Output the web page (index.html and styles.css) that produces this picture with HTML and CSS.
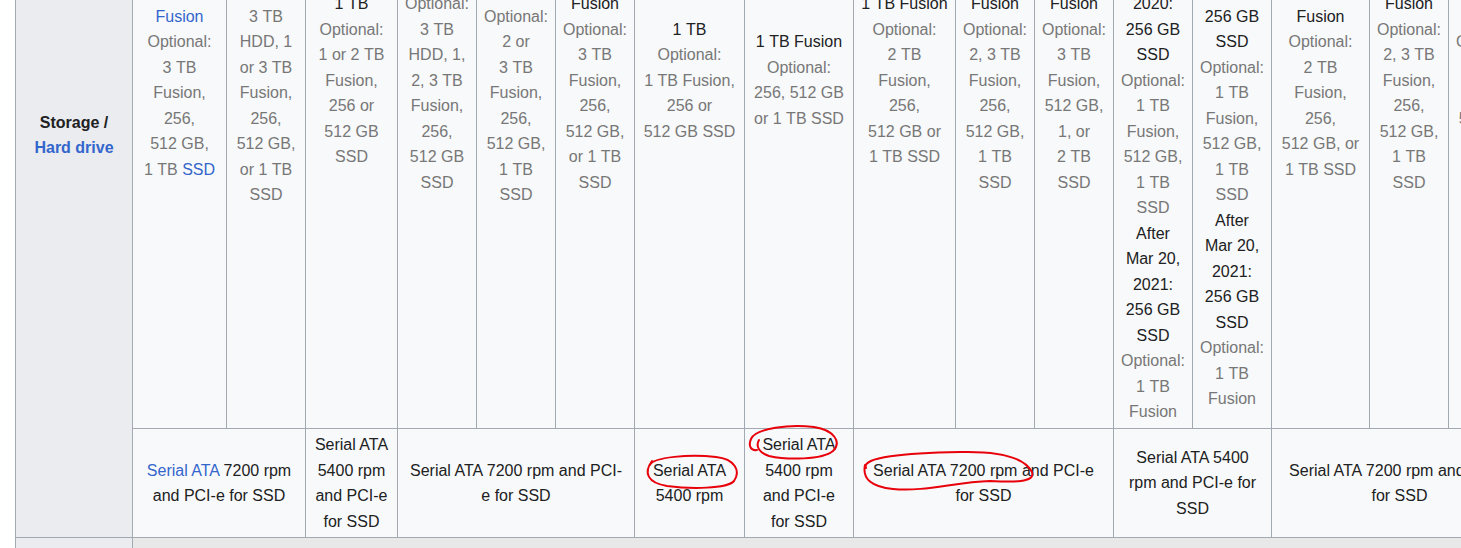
FILE: index.html
```html
<!DOCTYPE html>
<html lang="en">
<head>
<meta charset="utf-8">
<title>iMac storage comparison</title>
<link rel="stylesheet" href="styles.css">
</head>
<body>
<div class="page">
<table class="specs">
  <colgroup>
    <col class="w117"><col class="w94"><col class="w79"><col class="w92">
    <col class="w79"><col class="w79"><col class="w79"><col class="w110">
    <col class="w109"><col class="w102"><col class="w79"><col class="w79">
    <col class="w79"><col class="w79"><col class="w98"><col class="w79"><col class="w79">
  </colgroup>
  <tbody>
    <tr>
      <th rowspan="2" class="row-head">Storage / <a href="#">Hard drive</a></th>
      <td>1&nbsp;TB <a href="#">Fusion</a><br><span class="opt">Optional:<br>3&nbsp;TB Fusion, 256, 512&nbsp;GB, 1&nbsp;TB <a href="#">SSD</a></span></td>
      <td>1&nbsp;TB<br><span class="opt">Optional:<br>3&nbsp;TB HDD, 1 or 3&nbsp;TB Fusion, 256, 512&nbsp;GB, or 1&nbsp;TB SSD</span></td>
      <td>1&nbsp;TB<br><span class="opt">Optional:<br>1 or 2&nbsp;TB Fusion, 256 or 512&nbsp;GB SSD</span></td>
      <td>1&nbsp;TB<br><span class="opt">Optional:<br>3&nbsp;TB HDD, 1, 2, 3&nbsp;TB Fusion, 256, 512&nbsp;GB SSD</span></td>
      <td>1&nbsp;TB Fusion<br><span class="opt">Optional:<br>2 or 3&nbsp;TB Fusion, 256, 512&nbsp;GB, 1&nbsp;TB SSD</span></td>
      <td>1&nbsp;TB Fusion<br><span class="opt">Optional:<br>3&nbsp;TB Fusion, 256, 512&nbsp;GB, or 1&nbsp;TB SSD</span></td>
      <td>1&nbsp;TB<br><span class="opt">Optional:<br>1&nbsp;TB Fusion, 256 or 512&nbsp;GB SSD</span></td>
      <td>1&nbsp;TB Fusion<br><span class="opt">Optional:<br>256, 512&nbsp;GB or 1&nbsp;TB SSD</span></td>
      <td class="snug-pad">1&nbsp;TB Fusion<br><span class="opt">Optional:<br>2&nbsp;TB Fusion, 256, 512&nbsp;GB or 1&nbsp;TB SSD</span></td>
      <td>1&nbsp;TB Fusion<br><span class="opt">Optional:<br>2, 3&nbsp;TB Fusion, 256, 512&nbsp;GB, 1&nbsp;TB SSD</span></td>
      <td>1&nbsp;TB Fusion<br><span class="opt">Optional:<br>3&nbsp;TB Fusion, 512&nbsp;GB, 1, or 2&nbsp;TB SSD</span></td>
      <td>Before Aug&nbsp;4, 2020: 1&nbsp;TB HDD<br><span class="opt">Optional:<br>1&nbsp;TB Fusion</span><br>After Aug&nbsp;4, 2020: 256&nbsp;GB SSD<br><span class="opt">Optional:<br>1&nbsp;TB Fusion, 512&nbsp;GB, 1&nbsp;TB SSD</span><br>After Mar&nbsp;20, 2021: 256&nbsp;GB SSD<br><span class="opt">Optional:<br>1&nbsp;TB Fusion</span></td>
      <td>Before 2020: 1&nbsp;TB HDD<br><span class="opt">Optional:<br>1&nbsp;TB Fusion</span><br>After Aug&nbsp;4, 2020: 256&nbsp;GB SSD<br><span class="opt">Optional:<br>1&nbsp;TB Fusion, 512&nbsp;GB, 1&nbsp;TB SSD</span><br>After Mar&nbsp;20, 2021: 256&nbsp;GB SSD<br><span class="opt">Optional:<br>1&nbsp;TB Fusion</span></td>
      <td>1&nbsp;TB Fusion<br><span class="opt">Optional:<br>2&nbsp;TB Fusion, 256, 512&nbsp;GB, or 1&nbsp;TB SSD</span></td>
      <td>1&nbsp;TB Fusion<br><span class="opt">Optional:<br>2, 3&nbsp;TB Fusion, 256, 512&nbsp;GB, 1&nbsp;TB SSD</span></td>
      <td>1&nbsp;TB Fusion<br><span class="opt">Optional:<br>2, 3&nbsp;TB Fusion, 512&nbsp;GB, 1&nbsp;TB SSD</span></td>
    </tr>
    <tr>
      <td colspan="2"><a href="#">Serial ATA</a> 7200 rpm and PCI-e for SSD</td>
      <td>Serial ATA 5400 rpm and PCI-e for SSD</td>
      <td colspan="3" class="wide-pad">Serial ATA 7200 rpm and PCI-e for SSD</td>
      <td>Serial ATA 5400 rpm</td>
      <td class="wide-pad">Serial ATA 5400 rpm and PCI-e for SSD</td>
      <td colspan="3" class="wide-pad">Serial ATA 7200 rpm and PCI-e for SSD</td>
      <td colspan="2">Serial ATA 5400 rpm and PCI-e for SSD</td>
      <td colspan="3">Serial ATA 7200 rpm and PCI-e for SSD</td>
    </tr>
    <tr class="next-row">
      <th></th>
      <td colspan="16" class="shaded"></td>
    </tr>
  </tbody>
</table>

<svg class="marks" width="1461" height="548" viewBox="0 0 1461 548" aria-hidden="true">
  <path d="M650 465 C653 457 690 454 716 457 C735 459 741 471 734 481 C727 489 690 489 667 486 C648 483 643 473 652 461"/>
  <path d="M757 450 C751 451 748 446 751 439 C756 428 790 424 814 427 C834 430 842 442 833 451 C822 460 787 460 769 456 C760 453 755 447 759 440"/>
  <path d="M866 468 C861 457 905 453 960 452 C1000 451 1024 457 1032 472 C1036 483 1012 482 990 481 C955 482 925 492 893 489 C872 487 862 479 865 465"/>
</svg>
</div>
</body>
</html>
```

FILE: styles.css
```css
html, body {
  margin: 0;
  padding: 0;
  overflow: hidden;
  background: #ffffff;
}

body {
  font-family: "Liberation Sans", Arial, sans-serif;
  font-size: 16px;
  line-height: 25.5px;
  color: #202122;
}

.page {
  position: relative;
  width: 1461px;
  height: 548px;
  overflow: hidden;
}

.specs {
  border-collapse: collapse;
  table-layout: fixed;
  width: 1512px;
  margin: -268px 0 0 15px;
  background: #f8f9fa;
  color: #202122;
  border: 1px solid #a2a9b1;
}

.specs th,
.specs td {
  border: 1px solid #a2a9b1;
  padding: 3.2px 6.4px;
  text-align: center;
  vertical-align: middle;
}

.specs td.wide-pad {
  padding-left: 10px;
  padding-right: 10px;
}

.specs td.snug-pad {
  padding-left: 6.9px;
  padding-right: 6.9px;
}

.specs th {
  background: #eaecf0;
  font-weight: bold;
}

.specs a {
  color: #3366cc;
  text-decoration: none;
}

.opt {
  color: #777777;
}

.next-row th,
.next-row td {
  height: 60px;
}

.shaded {
  background: #e8e8e8;
}

.w117 { width: 117px; }
.w110 { width: 110px; }
.w109 { width: 109px; }
.w102 { width: 102px; }
.w98 { width: 98px; }
.w94 { width: 94px; }
.w92 { width: 92px; }
.w79 { width: 79px; }

.marks {
  position: absolute;
  left: 0;
  top: 0;
  pointer-events: none;
}

.marks path {
  fill: none;
  stroke: #e8000b;
  stroke-width: 2;
  stroke-linecap: round;
  stroke-linejoin: round;
}
```
